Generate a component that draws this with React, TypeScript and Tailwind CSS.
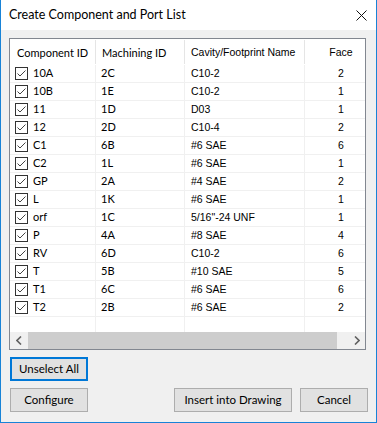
import React from "react";

type Row = [string, string, string, string];

const rows: Row[] = [
  ["10A", "2C", "C10-2", "2"],
  ["10B", "1E", "C10-2", "1"],
  ["11", "1D", "D03", "1"],
  ["12", "2D", "C10-4", "2"],
  ["C1", "6B", "#6 SAE", "6"],
  ["C2", "1L", "#6 SAE", "1"],
  ["GP", "2A", "#4 SAE", "2"],
  ["L", "1K", "#6 SAE", "1"],
  ["orf", "1C", '5/16"-24 UNF', "1"],
  ["P", "4A", "#8 SAE", "4"],
  ["RV", "6D", "C10-2", "6"],
  ["T", "5B", "#10 SAE", "5"],
  ["T1", "6C", "#6 SAE", "6"],
  ["T2", "2B", "#6 SAE", "2"],
];

function CheckBox() {
  return (
    <svg width="13" height="13" viewBox="0 0 13 13" className="shrink-0">
      <rect x="0.5" y="0.5" width="12" height="12" fill="#fff" stroke="#333" />
      <path d="M2.5 6.5 L5 9 L10.5 3.5" fill="none" stroke="#444" strokeWidth="1" />
    </svg>
  );
}

function WinButton({ label, width, focused }: { label: string; width: string; focused?: boolean }) {
  return (
    <button
      className={`${width} h-[24px] bg-[#e1e1e1] text-[11.5px] text-black font-[Lato,sans-serif] flex items-center justify-center ${
        focused ? "border-2 border-[#0078d7]" : "border border-[#adadad]"
      }`}
    >
      {label}
    </button>
  );
}

export default function App() {
  return (
    <div className="w-[377px] h-[423px] bg-[#f0f0f0] border-x border-b border-[#1883d7] flex flex-col font-[Lato,sans-serif] text-black select-none">
      <div className="h-[30px] bg-white flex items-center justify-between pl-[8px] pr-[9px] shrink-0">
        <span className="text-[12.5px] pt-[1px]">Create Component and Port List</span>
        <svg width="11" height="11" viewBox="0 0 11 11">
          <path d="M0.5 0.5 L10.5 10.5 M10.5 0.5 L0.5 10.5" stroke="#111" strokeWidth="1" />
        </svg>
      </div>

      <div className="flex flex-col pl-[8px] pt-[8px]">
        <div className="w-[357px] h-[312px] border border-[#828790] bg-white flex flex-col overflow-hidden">
          <div className="h-[26px] flex shrink-0 text-[11px]">
            <div className="w-[86px] shrink-0 border-r border-[#e5e5e5] pl-[7px] flex items-center pt-[2px] my-[1px]">Component ID</div>
            <div className="w-[89px] shrink-0 border-r border-[#e5e5e5] pl-[6px] flex items-center pt-[2px] my-[1px]">Machining ID</div>
            <div className="w-[120px] shrink-0 border-r border-[#e5e5e5] pl-[6px] flex items-center pt-[2px] my-[1px] font-['Liberation_Sans',Arial,sans-serif] text-[10.5px]">Cavity/Footprint Name</div>
            <div className="w-[72px] shrink-0 flex items-center justify-center pt-[2px] font-['Liberation_Sans',Arial,sans-serif] text-[10.5px]">Face</div>
          </div>
          {rows.map((r) => (
            <div key={r[0]} className="h-[18px] flex shrink-0 border-b border-[#f0f0f0]">
              <div className="w-[86px] shrink-0 border-r border-[#f0f0f0] pl-[5px] flex items-center gap-[5px] text-[11px]">
                <CheckBox />
                <span>{r[0]}</span>
              </div>
              <div className="w-[89px] shrink-0 border-r border-[#f0f0f0] pl-[5px] flex items-center text-[11px]">{r[1]}</div>
              <div className="w-[120px] shrink-0 border-r border-[#f0f0f0] pl-[6px] flex items-center font-['Liberation_Sans',Arial,sans-serif] text-[10.5px]">{r[2]}</div>
              <div className="w-[72px] shrink-0 flex items-center justify-center font-['Liberation_Sans',Arial,sans-serif] text-[10.5px]">{r[3]}</div>
            </div>
          ))}
          <div className="flex-1 flex">
            <div className="w-[86px] shrink-0 border-r border-[#f0f0f0]" />
            <div className="w-[89px] shrink-0 border-r border-[#f0f0f0]" />
            <div className="w-[120px] shrink-0 border-r border-[#f0f0f0]" />
          </div>
          <div className="h-[17px] shrink-0 bg-[#f0f0f0] flex items-stretch">
            <div className="w-[17px] shrink-0 flex items-center justify-center">
              <svg width="6" height="9" viewBox="0 0 6 9">
                <path d="M5 0.5 L1 4.5 L5 8.5" fill="none" stroke="#606060" strokeWidth="1.6" />
              </svg>
            </div>
            <div className="w-[309px] shrink-0 bg-[#cdcdcd] ml-[1px]" />
            <div className="flex-1" />
            <div className="w-[17px] shrink-0 flex items-center justify-center">
              <svg width="6" height="9" viewBox="0 0 6 9">
                <path d="M1 0.5 L5 4.5 L1 8.5" fill="none" stroke="#606060" strokeWidth="1.6" />
              </svg>
            </div>
          </div>
        </div>

        <div className="mt-[7px] pl-[1px]">
          <WinButton label="Unselect All" width="w-[78px]" focused />
        </div>
        <div className="mt-[7px] pl-[1px] flex">
          <WinButton label="Configure" width="w-[78px]" />
          <div className="ml-[86px]">
            <WinButton label="Insert into Drawing" width="w-[118px]" />
          </div>
          <div className="ml-[8px]">
            <WinButton label="Cancel" width="w-[68px]" />
          </div>
        </div>
      </div>
    </div>
  );
}
